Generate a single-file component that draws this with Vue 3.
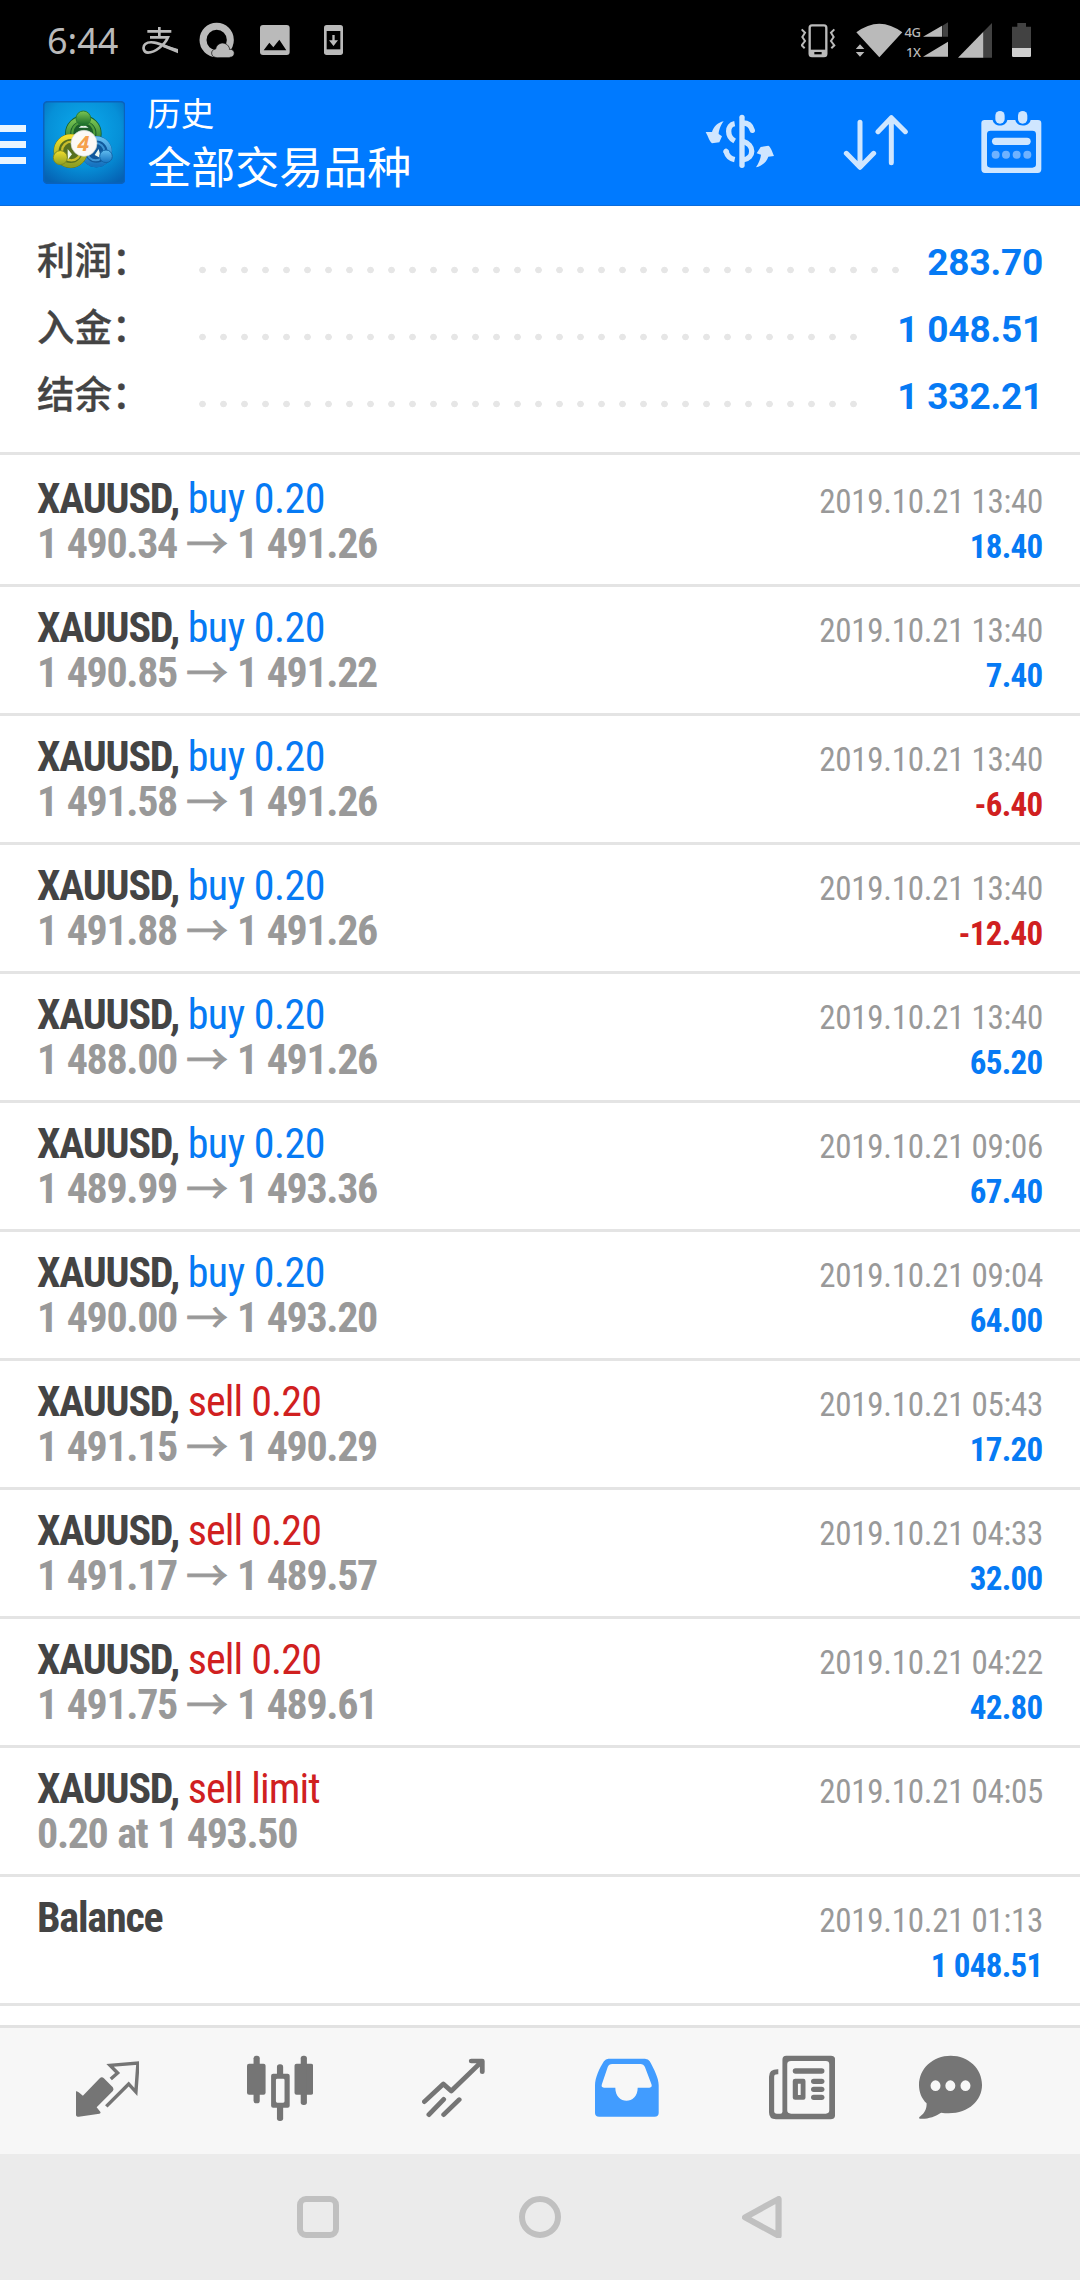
<script setup>
const summary = [
  { label: '利润：', value: '283.70', dots: 34 },
  { label: '入金：', value: '1 048.51', dots: 32 },
  { label: '结余：', value: '1 332.21', dots: 32 },
]

const deals = [
  { side: 'buy', action: 'buy 0.20', from: '1 490.34', to: '1 491.26', time: '2019.10.21 13:40', profit: '18.40' },
  { side: 'buy', action: 'buy 0.20', from: '1 490.85', to: '1 491.22', time: '2019.10.21 13:40', profit: '7.40' },
  { side: 'buy', action: 'buy 0.20', from: '1 491.58', to: '1 491.26', time: '2019.10.21 13:40', profit: '-6.40' },
  { side: 'buy', action: 'buy 0.20', from: '1 491.88', to: '1 491.26', time: '2019.10.21 13:40', profit: '-12.40' },
  { side: 'buy', action: 'buy 0.20', from: '1 488.00', to: '1 491.26', time: '2019.10.21 13:40', profit: '65.20' },
  { side: 'buy', action: 'buy 0.20', from: '1 489.99', to: '1 493.36', time: '2019.10.21 09:06', profit: '67.40' },
  { side: 'buy', action: 'buy 0.20', from: '1 490.00', to: '1 493.20', time: '2019.10.21 09:04', profit: '64.00' },
  { side: 'sell', action: 'sell 0.20', from: '1 491.15', to: '1 490.29', time: '2019.10.21 05:43', profit: '17.20' },
  { side: 'sell', action: 'sell 0.20', from: '1 491.17', to: '1 489.57', time: '2019.10.21 04:33', profit: '32.00' },
  { side: 'sell', action: 'sell 0.20', from: '1 491.75', to: '1 489.61', time: '2019.10.21 04:22', profit: '42.80' },
  { side: 'sell', action: 'sell limit', note: '0.20 at 1 493.50', time: '2019.10.21 04:05' },
  { title: 'Balance', time: '2019.10.21 01:13', profit: '1 048.51' },
]
</script>

<template>
  <div class="screen">
    <div class="status">
      <span class="clock">6:44</span>
      <svg class="s-pay" viewBox="426 66 108 108" width="36" height="36" fill="none" stroke="#bababa" stroke-width="8">
        <path d="M442 94H514M478 81V112M450 112H504C496 132 466 158 444 158C428 158 428 138 436 132C454 118 482 134 534 153" />
        <path d="M496 136L534 147V160L488 141Z" fill="#bababa" stroke="none" />
      </svg>
      <svg class="s-q" viewBox="598 66 108 108" width="36" height="36">
        <circle cx="651" cy="120" r="41" fill="none" stroke="#bababa" stroke-width="21" />
        <path d="M647 172C633 170 631 149 648 147C651 129 674 122 686 138C690 144 690 148 689 148C708 146 709 172 690 172Z" fill="#bababa" stroke="#000" stroke-width="2" />
        <path d="M651 172H690V162H640Z" fill="#bababa" />
      </svg>
      <svg class="s-img" viewBox="780 66 90 108" width="30" height="36">
        <rect x="780" y="75" width="89" height="90" rx="9" fill="#bababa" />
        <path d="M791 151L808 128L820 142L838 119L859 151Z" fill="#000" />
      </svg>
      <svg class="s-dl" viewBox="971 66 57 108" width="19" height="36">
        <rect x="971" y="75" width="57" height="90" rx="8" fill="#bababa" />
        <rect x="979" y="93" width="41" height="55" fill="#000" />
        <path d="M996 105H1003V121H1013L999.500 138L986 121H996Z" fill="#bababa" />
      </svg>
      <span class="grow"></span>
      <svg viewBox="361 66 104 108" width="34.670" height="36" fill="none" stroke="#bababa">
        <rect x="387" y="76" width="50" height="92" rx="7" stroke-width="7" />
        <path d="M386 149H438V168H386Z" fill="#bababa" stroke="none" />
        <rect x="401" y="156" width="22" height="7" fill="#000" stroke="none" />
        <path d="M363 88L373 98L365 111L373 123L363 136L372 145M461 88L451 98L459 111L451 123L461 136L452 145" stroke-width="6" />
      </svg>
      <svg class="s-wifi" viewBox="526 66 140 108" width="46.670" height="36" fill="#bababa">
        <path d="M527 97Q596 45 665 97L596 172ZM538 133L551 147H525ZM525 156H551L538 170Z" />
      </svg>
      <span class="net"><span>4G</span><span>1X</span></span>
      <svg class="s-dual" viewBox="726 66 75 108" width="25" height="36">
        <path d="M784 77L801 67V110H784Z" fill="#424242" />
        <path d="M726 110L783 77V110ZM726 170L801 125V170Z" fill="#bababa" />
      </svg>
      <svg class="s-sig" viewBox="832 66 103 108" width="34.330" height="36">
        <path d="M908 95L935 68V173H908Z" fill="#424242" />
        <path d="M832 173L908 95V173Z" fill="#bababa" />
      </svg>
      <svg class="s-bat" viewBox="996 66 57 108" width="19" height="36">
        <path d="M996 80H1012V69H1038V80H1053V144H996Z" fill="#424242" />
        <path d="M996 144H1053V167Q1053 171 1049 171H1000Q996 171 996 167Z" fill="#cfcfcf" />
      </svg>
    </div>

    <header class="appbar">
      <div class="menu"><i></i><i></i><i></i></div>
      <svg class="logo" viewBox="129 304 247 249" width="82.330" height="83">
        <defs>
          <radialGradient id="bg" cx="50%" cy="35%" r="75%"><stop offset="0" stop-color="#0cabed" /><stop offset=".6" stop-color="#0690d8" /><stop offset="1" stop-color="#0562b4" /></radialGradient>
          <linearGradient id="gr" x1="0" y1="0" x2="0" y2="1"><stop offset="0" stop-color="#7cc653" /><stop offset="1" stop-color="#14682a" /></linearGradient>
          <linearGradient id="ye" x1="0" y1="0" x2="0" y2="1"><stop offset="0" stop-color="#f3df2c" /><stop offset="1" stop-color="#8fa023" /></linearGradient>
          <linearGradient id="bl" x1="0" y1="0" x2="0" y2="1"><stop offset="0" stop-color="#62bdf0" /><stop offset="1" stop-color="#1673c0" /></linearGradient>
        </defs>
        <rect x="131" y="306" width="243" height="245" rx="12" fill="url(#bg)" stroke="#0a62bd" stroke-width="5" />
        <circle cx="250" cy="402" r="53" fill="#1c5f2b" stroke="#17602f" stroke-width="4" />
        <circle cx="250" cy="402" r="46" fill="none" stroke="url(#gr)" stroke-width="13" />
        <circle cx="250" cy="400" r="33" fill="none" stroke="#4e9e3b" stroke-width="6" />
        <circle cx="289" cy="456" r="46" fill="#10599c" stroke="#0b5a9f" stroke-width="3" />
        <circle cx="289" cy="456" r="40" fill="none" stroke="url(#bl)" stroke-width="13" />
        <circle cx="287" cy="456" r="26" fill="none" stroke="#3c94d4" stroke-width="6" />
        <circle cx="212" cy="454" r="50" fill="#57701f" stroke="#68751c" stroke-width="3" />
        <circle cx="212" cy="454" r="43" fill="none" stroke="url(#ye)" stroke-width="14" />
        <circle cx="214" cy="454" r="28" fill="none" stroke="#c9bd2b" stroke-width="7" />
        <path d="M236 384L250 374L266 384ZM203 448L216 464L203 480ZM296 448L284 466L303 476Z" fill="#eaf8ef" />
        <circle cx="250" cy="356" r="22" fill="url(#gr)" stroke="#2b7d35" stroke-width="3" />
        <circle cx="181" cy="474" r="21" fill="url(#ye)" stroke="#7d8b20" stroke-width="3" />
        <circle cx="318" cy="470" r="19" fill="url(#bl)" stroke="#1264a8" stroke-width="3" />
        <circle cx="252" cy="431" r="39" fill="#fbf9f6" stroke="#c9d3ce" stroke-width="2" />
        <text x="250" y="454" text-anchor="middle" class="four">4</text>
      </svg>
      <div class="titles">
        <div class="t1">历史</div>
        <div class="t2">全部交易品种</div>
      </div>
      <span class="grow"></span>
      <svg class="h-dollar" viewBox="76 330 210 200" width="70" height="66.670">
        <g fill="none" stroke="#cfe6ff" stroke-width="14">
          <path d="M187 352V496" stroke-width="16" stroke-linecap="round" />
          <path d="M165 371C141 375 141 410 165 423M139 454C143 469 151 476 165 479" stroke-width="16" />
          <path d="M139 454L140 455M218 391C214 376 204 369 190 369M190 424C225 434 225 474 190 480" stroke-width="16" stroke-linecap="round" />
        </g>
        <path d="M132 364C122 376 117 393 117 402L127 409L119 427L97 430C90 425 85 409 78 396L97 396C102 381 114 367 132 364Z" fill="#cfe6ff" />
        <path d="M229 502C237 490 243 476 244 464L231 460L243 441L266 437C273 440 278 456 283 468L266 470C260 486 248 498 229 502Z" fill="#cfe6ff" />
      </svg>
      <svg class="h-sort" viewBox="490 330 196 200" width="65.330" height="66.670" fill="none" stroke="#cfe6ff" stroke-width="15" stroke-linecap="round" stroke-linejoin="round">
        <path d="M541 367V502M500 460L541 502L582 460M635 488V353M595 395L635 353L677 395" />
      </svg>
      <svg class="h-cal" viewBox="905 330 182 200" width="60.670" height="66.670">
        <path fill-rule="evenodd" fill="#cfe6ff" d="M916 360H940C944 382 980 382 984 360H1008C1012 382 1050 382 1054 360H1076Q1086 360 1086 370V508Q1086 519 1075 519H917Q906 519 906 508V370Q906 360 916 360ZM934 392Q923 392 923 402V493Q923 503 934 503H1059Q1070 503 1070 493V402Q1070 392 1059 392Z" />
        <rect x="948" y="333" width="28" height="38" rx="14" fill="#cfe6ff" /><rect x="1016" y="333" width="28" height="38" rx="14" fill="#cfe6ff" />
        <rect x="938" y="413" width="116" height="22" rx="11" fill="#cfe6ff" />
        <g fill="#6fb2ff"><circle cx="949" cy="464" r="12" /><circle cx="980" cy="464" r="12" /><circle cx="1012" cy="464" r="12" /><circle cx="1044" cy="464" r="12" /></g>
      </svg>
    </header>

    <section class="summary">
      <div v-for="s in summary" :key="s.label" class="sum">
        <span class="label">{{ s.label }}</span>
        <span class="dots" :style="{ width: s.dots * 21 + 'px' }"></span>
        <span class="value">{{ s.value }}</span>
      </div>
    </section>

    <section class="list">
      <div v-for="(d, i) in deals" :key="i" class="deal">
        <div class="left">
          <div class="line"><b>{{ d.title || 'XAUUSD,' }}</b><span v-if="d.action" :class="['act', d.side]">{{ d.action }}</span></div>
          <div v-if="d.from" class="line price"><span>{{ d.from }}</span><span class="arrow">→</span><span>{{ d.to }}</span></div>
          <div v-else-if="d.note" class="line price">{{ d.note }}</div>
        </div>
        <div class="right">
          <div class="time">{{ d.time }}</div>
          <div v-if="d.profit" :class="['profit', { loss: d.profit[0] === '-' }]">{{ d.profit }}</div>
        </div>
      </div>
    </section>

    <nav class="tabs">
      <svg class="tab a" viewBox="220 160 185 210" preserveAspectRatio="none" width="63.700" height="70" fill="#757575">
        <path d="M220 275Q222 272 240 288L289 236Q295 230 301 236L327 263Q331 269 327 274L280 323L291 337Q293 341 288 342L228 351Q220 351 220 345Z" />
        <path d="M321 238L341 220L319 197L400 190L394 277L373 253L308 320" fill="none" stroke="#757575" stroke-width="10" />
      </svg>
      <svg class="tab b" viewBox="717 160 193 210" preserveAspectRatio="none" width="66.460" height="70" fill="#757575">
        <rect x="717" y="192" width="54" height="93" rx="6" /><rect x="736" y="168" width="18" height="143" rx="8" />
        <rect x="855" y="192" width="54" height="93" rx="6" /><rect x="873" y="168" width="18" height="148" rx="8" />
        <rect x="804" y="194" width="18" height="40" rx="8" /><rect x="804" y="315" width="18" height="49" rx="8" />
        <path fill-rule="evenodd" d="M793 222H835Q841 222 841 228V318Q841 324 835 324H793Q787 324 787 318V228Q787 222 793 222ZM805 237Q801 237 801 241V305Q801 309 805 309H822Q826 309 826 305V241Q826 237 822 237Z" />
      </svg>
      <svg class="tab c" viewBox="1225 160 184 210" preserveAspectRatio="none" width="63.360" height="70" fill="none" stroke="#757575" stroke-width="14" stroke-linecap="round" stroke-linejoin="round">
        <path d="M1232 306L1287 253L1310 274L1399 185M1368 184H1400V216M1245 345L1288 299M1288 345L1333 300" />
      </svg>
      <svg class="tab d" viewBox="161 160 185 210" preserveAspectRatio="none" width="63.700" height="70" fill="#419cff">
        <path fill-rule="evenodd" d="M200 177H306Q316 177 320 185C333 210 346 235 346 257V340Q346 351 334 351H173Q161 351 161 340V257C161 235 174 205 187 185Q192 177 200 177ZM211 193Q201 193 198 202L181 254Q178 264 187 264H220C220 316 285 316 285 264H319Q328 264 325 254L306 202Q302 193 293 193Z" />
      </svg>
      <svg class="tab e" viewBox="664 160 192 210" preserveAspectRatio="none" width="66.120" height="70" fill="#757575">
        <path fill-rule="evenodd" d="M714 168H844Q856 168 856 180V345Q856 359 843 359H684Q664 359 664 338V231Q664 208 691 209V224Q679 223 679 231V335Q679 342 687 342H697Q703 342 703 336V180Q703 168 714 168ZM728 184Q717 184 717 194V332Q717 342 728 342H829Q839 342 839 332V194Q839 184 829 184Z" />
        <path fill-rule="evenodd" d="M740 237H764Q770 237 770 244V294Q770 300 764 300H740Q733 300 733 294V244Q733 237 740 237ZM748 252V286H756V252Z" />
        <rect x="733" y="206" width="92" height="16" rx="8" /><rect x="786" y="237" width="39" height="16" rx="8" /><rect x="786" y="261" width="39" height="16" rx="8" /><rect x="786" y="285" width="39" height="16" rx="8" />
      </svg>
      <svg class="tab f" viewBox="1102 160 184 210" preserveAspectRatio="none" width="63.360" height="70" fill="#757575">
        <path fill-rule="evenodd" d="M1194 168C1246 168 1285 207 1285 256C1285 307 1238 350 1166 339C1149 351 1126 359 1104 357C1101 355 1102 353 1106 350C1118 341 1125 327 1124 311C1109 296 1102 277 1102 256C1102 207 1142 168 1194 168ZM1150 242A14.500 16 0 1 0 1150 274A14.500 16 0 1 0 1150 242ZM1193 242A14.500 16 0 1 0 1193 274A14.500 16 0 1 0 1193 242ZM1237 242A14.500 16 0 1 0 1237 274A14.500 16 0 1 0 1237 242Z" />
      </svg>
    </nav>

    <div class="sysnav">
      <i class="sq"></i>
      <i class="ci"></i>
      <svg class="back" viewBox="588 587 116 128" preserveAspectRatio="none" width="40" height="42.670" fill="none" stroke="#c0c0c0" stroke-width="18" stroke-linejoin="round">
        <path d="M597 651L694 596V706Z" />
      </svg>
    </div>
  </div>
</template>

<style>
body { margin: 0; background: #fff; }
</style>

<style scoped>
.screen { width: 1080px; height: 2280px; display: flex; flex-direction: column; overflow: hidden; background: #fff; font-family: Roboto, "Noto Sans CJK SC", sans-serif; }
.screen svg { display: block; flex: none; }
.grow { flex: 1; }

.status { height: 80px; flex: none; box-sizing: border-box; padding: 22px 49px 0 47px; background: #000; color: #bababa; display: flex; align-items: flex-start; }
.clock { font: 36px/40px "Noto Sans", sans-serif; width: 71px; margin-top: -1px; }
.s-pay { margin-left: 24px; }
.s-q { margin-left: 21px; }
.s-img { margin-left: 25px; }
.s-dl { margin-left: 34px; }
.s-wifi { margin-left: 20px; }
.net { display: flex; flex-direction: column; width: 16px; margin-left: 2px; align-items: flex-end; font: 500 13px/20px "Noto Sans", sans-serif; letter-spacing: -.3px; }
.s-dual { margin-left: 2px; }
.s-sig { margin-left: 10px; }
.s-bat { margin-left: 20px; }

.appbar { height: 126px; flex: none; box-sizing: border-box; border-bottom: 1px solid #0a6cdc; background: #007aff; display: flex; align-items: flex-start; padding-right: 38px; color: #fff; }
.menu { width: 26px; margin-top: 45px; display: flex; flex-direction: column; gap: 8.500px; }
.menu i { display: block; height: 7.330px; background: #e9f5ff; }
.logo { margin: 21px 0 0 17px; }
.four { font: italic bold 64px "Noto Sans", sans-serif; fill: #f5a04c; }
.titles { margin-left: 22px; font-family: "Noto Sans CJK SC", sans-serif; white-space: nowrap; }
.t1 { font-size: 33.500px; line-height: 40px; margin-top: 12px; }
.t2 { font-size: 44px; line-height: 60px; margin-top: 3px; }
.h-dollar { margin-top: 30px; }
.h-sort { margin: 30px 0 0 68px; }
.h-cal { margin: 30px 0 0 73px; }

.summary { height: 249px; flex: none; box-sizing: border-box; padding: 23px 37px 0; border-bottom: 3px solid #e4e4e4; }
.sum { height: 67px; display: flex; line-height: 67px; }
.label { width: 155px; flex: none; font-size: 37.500px; line-height: 65px; font-weight: 500; color: #444; -webkit-text-stroke: .3px #444; white-space: nowrap; }
.dots { flex: none; height: 8px; margin-top: 37px; background: radial-gradient(circle, #e6e6e6 3px, transparent 3.600px) 0 0 / 21px 8px repeat-x; }
.value { margin-left: auto; font-size: 37px; font-weight: 700; letter-spacing: -.2px; color: #067af4; white-space: nowrap; }

.list { flex: 1; padding-top: 3px; }
.deal { height: 129px; box-sizing: border-box; border-bottom: 3px solid #e4e4e4; padding: 0 37px; display: flex; justify-content: space-between; font-stretch: 75%; font-family: "Roboto Condensed", Roboto, "Noto Sans CJK SC", sans-serif; white-space: nowrap; }
.left { padding-top: 18px; font-size: 42px; color: #444; }
.line { height: 45px; line-height: 45px; display: flex; }
.line b { font-weight: 700; letter-spacing: -1.200px; }
.act { margin-left: 8.700px; }
.buy { color: #067af4; letter-spacing: -.5px; }
.sell { color: #d0201f; letter-spacing: -.850px; }
.price { font-weight: 700; color: #999; letter-spacing: -1.350px; word-spacing: 1.500px; }
.arrow { font-family: "Noto Sans CJK SC", sans-serif; font-weight: 400; line-height: 40px; letter-spacing: 0; -webkit-text-stroke: .9px #999; margin: 0 9px; }
.right { padding-top: 21px; text-align: right; font-size: 33px; line-height: 45px; }
.time { color: #999; letter-spacing: -.270px; }
.profit { font-weight: 700; color: #067af4; letter-spacing: -.7px; margin-right: .5px; }
.profit.loss { color: #d0201f; }

.tabs { height: 129px; flex: none; box-sizing: border-box; border-top: 3px solid #e2e2e2; background: #f7f7f7; display: flex; padding: 25px 0 0 75.800px; }
.b { margin-left: 107.400px; }
.c { margin-left: 108.500px; }
.d { margin-left: 110.200px; }
.e { margin-left: 109.500px; }
.f { margin-left: 84.700px; }

.sysnav { height: 126px; flex: none; background: #ebebeb; display: flex; align-items: center; }
.sq, .ci { box-sizing: border-box; width: 42px; height: 42px; border: 6px solid #c0c0c0; border-radius: 9px; margin-left: 297px; }
.ci { border-radius: 50%; margin-left: 180px; }
.back { margin-left: 181px; }
</style>
